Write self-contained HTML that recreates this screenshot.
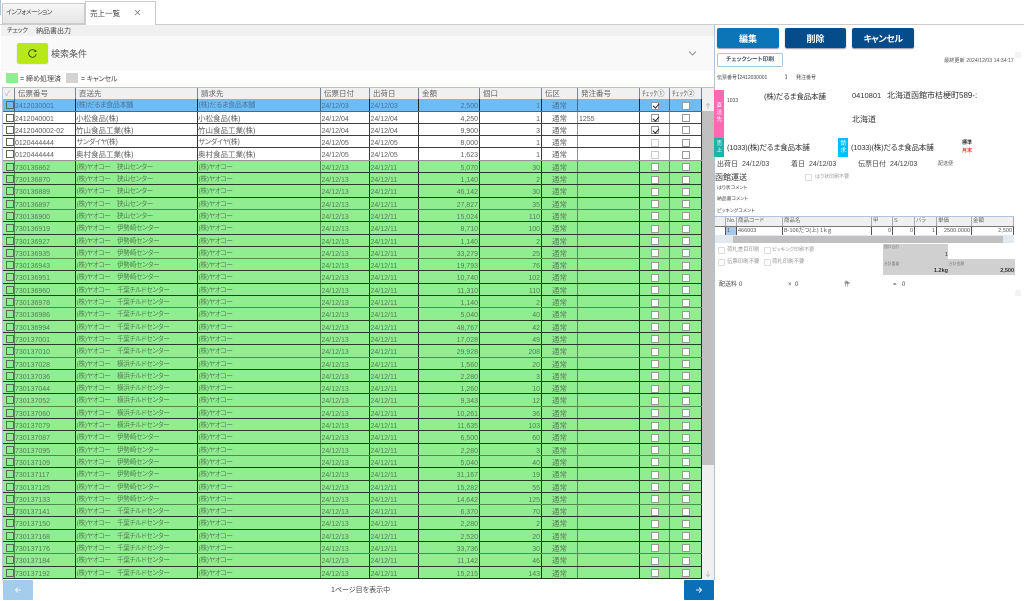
<!DOCTYPE html>
<html lang="ja"><head><meta charset="utf-8"><title>売上一覧</title>
<style>
html,body{margin:0;padding:0;background:#fff}
body{width:1024px;height:601px;position:relative;overflow:hidden;font-family:"Liberation Sans","Noto Sans CJK JP",sans-serif;font-size:7.5px;color:#555;font-feature-settings:"palt"}
.a{position:absolute;white-space:nowrap;line-height:1}
.hd,.r{position:absolute;left:3px;width:699px;display:flex;box-sizing:border-box}
.hd{top:87px;height:12.5px;background:#f0f0f0;border-top:1px solid #b4c4da;color:#666}
.hd span{border-right:1px solid #7a8696;padding-left:3px;line-height:12.5px;box-sizing:border-box;overflow:hidden;white-space:nowrap}
.t{position:absolute;left:0;top:99.3px;width:702px}
.r{position:relative;height:12.3px;border-bottom:1px solid rgba(0,0,0,.75);background:#fff;color:#606060}
.r:nth-child(4n+1){border-bottom:1.5px solid rgba(0,0,0,.42)}
.g{background:#90ee90;color:#567f56}
.s{background:#6dbcf5;color:#44749e}
.r span{display:block;height:100%;box-sizing:border-box;border-right:1px solid rgba(0,0,0,.78);line-height:11px;white-space:nowrap;overflow:hidden;position:relative}
.hd span:nth-child(1),.r span:nth-child(1){width:12px}
.hd span:nth-child(2),.r span:nth-child(2){width:61px;font-size:7px;padding-top:2px}
.hd span:nth-child(3),.r span:nth-child(3){width:122px;padding-top:1px}
.hd span:nth-child(4),.r span:nth-child(4){width:123px;padding-top:1px}
.hd span:nth-child(5),.r span:nth-child(5){width:49px;font-size:7px;padding-top:2px}
.hd span:nth-child(6),.r span:nth-child(6){width:49px;font-size:7px;padding-top:2px}
.hd span:nth-child(7),.r span:nth-child(7){width:61px;font-size:7px;padding-top:2px}
.hd span:nth-child(8),.r span:nth-child(8){width:62px;font-size:7px;padding-top:2px}
.hd span:nth-child(9),.r span:nth-child(9){width:36px;padding-top:1px}
.hd span:nth-child(10),.r span:nth-child(10){width:62px;font-size:7px;padding-top:2px}
.hd span:nth-child(11),.r span:nth-child(11){width:30px}
.hd span:nth-child(12),.r span:nth-child(12){width:32px}
.hd span{font-size:7.5px!important;padding-top:0!important}
.hd span:nth-child(11),.hd span:nth-child(12){font-size:7.5px!important;padding-left:2px}
.r span:nth-child(1),.r span:nth-child(9),.r span:nth-child(4),.r span:nth-child(11){border-right:1.5px solid rgba(0,0,0,.42)}
.r span:nth-child(7),.r span:nth-child(8){text-align:right;padding-right:1px}
.r span:nth-child(9){text-align:center}
.r span:nth-child(10){padding-left:1px}
.r span:nth-child(5),.r span:nth-child(6){padding-left:.5px}
.g span:nth-child(3),.g span:nth-child(4){font-size:6.7px;letter-spacing:-.35px;padding-left:.5px}
.l span:nth-child(3),.l span:nth-child(4){font-size:7px;letter-spacing:-.3px;padding-left:.5px}
.r span:nth-child(1)::before{content:"";position:absolute;left:2.5px;top:2px;width:6px;height:6px;border:1px solid #5b6a5b}
.r span:nth-child(11)::before,.r span:nth-child(12)::before{content:"";position:absolute;top:2.5px;width:6px;height:6px;border:1px solid #999;background:#fff}
.r span:nth-child(11)::before{left:11px}
.r span:nth-child(12)::before{left:12px}
.k::after{content:"";position:absolute;left:13.5px;top:3.2px;width:2.5px;height:5px;border:solid #222;border-width:0 1.4px 1.4px 0;transform:rotate(40deg)}
.f::before{border-color:#ccc!important}
.b{position:absolute;box-sizing:border-box;border-radius:2px;color:#fff;font-weight:bold;font-size:9px;text-align:center;line-height:22px;top:28px;height:20px;box-shadow:0 1px 1px #99a}
.cb{position:absolute;width:5px;height:5px;border:1px solid #ddd;background:#fff;border-radius:1px}
.lg{color:#999;font-size:5.4px}
.it{position:absolute;left:715px;top:216px;width:299px;height:27px;border:0}
.ih,.ir{position:absolute;left:0;width:299px;display:flex}
.ih{top:0;height:9.5px;background:#f0f0f0;border-top:1px solid #b4c4da;box-sizing:border-box;color:#666}
.ir{top:10px;height:9.5px;background:#fff;color:#555;border-top:1.5px solid #777;border-bottom:1.5px solid #666;box-sizing:border-box}
.ih span,.ir span{box-sizing:border-box;border-right:1px solid #555;font-size:5.5px;line-height:8px;white-space:nowrap;overflow:hidden;padding:0 1px}
.ih span{border-right-color:#aab}
.w1{width:11px}.w2{width:11px}.w3{width:46px}.w4{width:89px}.w5{width:21px}.w6{width:22px}.w7{width:22px}.w8{width:35px}.w9{width:42px}
.ra{text-align:right}
</style></head>
<body>
<!-- tabs -->
<div class="a" style="left:0;top:0;width:1px;height:15px;background:#a9c4e0"></div>
<div class="a" style="left:2px;top:3px;width:83px;height:21px;background:linear-gradient(#f6f6f6,#e6e6e6);border:1px solid #ccc;box-sizing:border-box"></div>
<div class="a" style="left:6px;top:10px;font-size:6.5px;color:#444;letter-spacing:-.5px">インフォメーション</div>
<div class="a" style="left:85px;top:1px;width:71px;height:24px;background:#fff;border:1px solid #ccc;border-bottom:0;box-sizing:border-box;z-index:2"></div>
<div class="a" style="left:90px;top:10px;font-size:7.5px;color:#444;z-index:3">売上一覧</div>
<svg class="a" style="left:134px;top:9px;z-index:3" width="7" height="7" viewBox="0 0 7 7"><path d="M1 1L6 6M6 1L1 6" stroke="#777" stroke-width=".8" fill="none"/></svg>
<div class="a" style="left:0;top:23.5px;width:1024px;height:1px;background:#ccc"></div>
<!-- menu -->
<div class="a" style="left:1px;top:25px;width:713px;height:11px;background:#f0f0f0"></div>
<div class="a" style="left:7px;top:28px;font-size:6.5px;color:#444;letter-spacing:-.4px">チェック</div>
<div class="a" style="left:36px;top:28px;font-size:7px;color:#444">納品書出力</div>
<!-- search -->
<div class="a" style="left:1px;top:36px;width:713px;height:35px;background:#f9f9f9"></div>
<div class="a" style="left:17px;top:43px;width:31px;height:20px;background:#b6e81a;border-radius:2px;box-shadow:0 1px 1px #bbb"></div>
<svg class="a" style="left:27px;top:48px" width="11" height="11" viewBox="0 0 11 11"><path d="M8.8 3.6A3.8 3.8 0 1 0 9.2 6.2" stroke="#39500a" stroke-width=".9" fill="none"/><path d="M6.8 3.6L9.3 4L9.2 1.6" fill="#39500a"/></svg>
<div class="a" style="left:51px;top:50px;font-size:9px;color:#555">検索条件</div>
<svg class="a" style="left:688px;top:50px" width="9" height="7" viewBox="0 0 9 7"><path d="M1 1.5L4.5 5L8 1.5" stroke="#888" stroke-width=".9" fill="none"/></svg>
<!-- legend -->
<div class="a" style="left:6px;top:73px;width:12px;height:10px;background:#90ee90"></div>
<div class="a" style="left:20px;top:76px;font-size:7px;color:#444">= 締め処理済</div>
<div class="a" style="left:66px;top:73px;width:12px;height:10px;background:#d3d3d3"></div>
<div class="a" style="left:81px;top:76px;font-size:7px;color:#444;letter-spacing:-.2px">= キャンセル</div>
<!-- grid -->
<div class="a" style="left:1.5px;top:87px;width:1.5px;height:493px;background:#b4c4da"></div>
<div class="hd"><span style="padding-left:2px;color:#aaa">✓</span><span>伝票番号</span><span>直送先</span><span>請求先</span><span>伝票日付</span><span>出荷日</span><span>金額</span><span>個口</span><span>伝区</span><span>発注番号</span><span>ﾁｪｯｸ①</span><span>ﾁｪｯｸ②</span></div>
<div class="a" style="left:702px;top:87px;width:12px;height:12.5px;background:#f0f0f0;border-top:1px solid #b4c4da;box-sizing:border-box"></div>
<div class="t" style="position:absolute">
<div class="r s l" style="left:3px"><span></span><span>2412030001</span><span>(株)だるま食品本舗</span><span>(株)だるま食品本舗</span><span>24/12/03</span><span>24/12/03</span><span>2,500</span><span>1</span><span>通常</span><span></span><span class="k"></span><span></span></div>
<div class="r" style="left:3px"><span></span><span>2412040001</span><span>小松食品(株)</span><span>小松食品(株)</span><span>24/12/04</span><span>24/12/04</span><span>4,250</span><span>1</span><span>通常</span><span>1255</span><span class="k"></span><span></span></div>
<div class="r" style="left:3px"><span></span><span>2412040002-02</span><span>竹山食品工業(株)</span><span>竹山食品工業(株)</span><span>24/12/04</span><span>24/12/04</span><span>9,900</span><span>3</span><span>通常</span><span></span><span class="k"></span><span></span></div>
<div class="r l" style="left:3px"><span></span><span>0120444444</span><span>サンダイヤ(株)</span><span>サンダイヤ(株)</span><span>24/12/05</span><span>24/12/05</span><span>8,000</span><span>1</span><span>通常</span><span></span><span class="f"></span><span></span></div>
<div class="r" style="left:3px"><span></span><span>0120444444</span><span>奥村食品工業(株)</span><span>奥村食品工業(株)</span><span>24/12/05</span><span>24/12/05</span><span>1,623</span><span>1</span><span>通常</span><span></span><span class="f"></span><span></span></div>
<div class="r g" style="left:3px"><span></span><span>730136862</span><span>(株)ヤオコー　狭山センター</span><span>(株)ヤオコー</span><span>24/12/13</span><span>24/12/11</span><span>5,070</span><span>30</span><span>通常</span><span></span><span></span><span></span></div>
<div class="r g" style="left:3px"><span></span><span>730136870</span><span>(株)ヤオコー　狭山センター</span><span>(株)ヤオコー</span><span>24/12/13</span><span>24/12/11</span><span>1,140</span><span>2</span><span>通常</span><span></span><span></span><span></span></div>
<div class="r g" style="left:3px"><span></span><span>730136889</span><span>(株)ヤオコー　狭山センター</span><span>(株)ヤオコー</span><span>24/12/13</span><span>24/12/11</span><span>46,142</span><span>30</span><span>通常</span><span></span><span></span><span></span></div>
<div class="r g" style="left:3px"><span></span><span>730136897</span><span>(株)ヤオコー　狭山センター</span><span>(株)ヤオコー</span><span>24/12/13</span><span>24/12/11</span><span>27,827</span><span>35</span><span>通常</span><span></span><span></span><span></span></div>
<div class="r g" style="left:3px"><span></span><span>730136900</span><span>(株)ヤオコー　狭山センター</span><span>(株)ヤオコー</span><span>24/12/13</span><span>24/12/11</span><span>15,024</span><span>110</span><span>通常</span><span></span><span></span><span></span></div>
<div class="r g" style="left:3px"><span></span><span>730136919</span><span>(株)ヤオコー　伊勢崎センター</span><span>(株)ヤオコー</span><span>24/12/13</span><span>24/12/11</span><span>8,710</span><span>100</span><span>通常</span><span></span><span></span><span></span></div>
<div class="r g" style="left:3px"><span></span><span>730136927</span><span>(株)ヤオコー　伊勢崎センター</span><span>(株)ヤオコー</span><span>24/12/13</span><span>24/12/11</span><span>1,140</span><span>2</span><span>通常</span><span></span><span></span><span></span></div>
<div class="r g" style="left:3px"><span></span><span>730136935</span><span>(株)ヤオコー　伊勢崎センター</span><span>(株)ヤオコー</span><span>24/12/13</span><span>24/12/11</span><span>33,279</span><span>25</span><span>通常</span><span></span><span></span><span></span></div>
<div class="r g" style="left:3px"><span></span><span>730136943</span><span>(株)ヤオコー　伊勢崎センター</span><span>(株)ヤオコー</span><span>24/12/13</span><span>24/12/11</span><span>19,793</span><span>76</span><span>通常</span><span></span><span></span><span></span></div>
<div class="r g" style="left:3px"><span></span><span>730136951</span><span>(株)ヤオコー　伊勢崎センター</span><span>(株)ヤオコー</span><span>24/12/13</span><span>24/12/11</span><span>10,740</span><span>102</span><span>通常</span><span></span><span></span><span></span></div>
<div class="r g" style="left:3px"><span></span><span>730136960</span><span>(株)ヤオコー　千葉チルドセンター</span><span>(株)ヤオコー</span><span>24/12/13</span><span>24/12/11</span><span>11,310</span><span>110</span><span>通常</span><span></span><span></span><span></span></div>
<div class="r g" style="left:3px"><span></span><span>730136978</span><span>(株)ヤオコー　千葉チルドセンター</span><span>(株)ヤオコー</span><span>24/12/13</span><span>24/12/11</span><span>1,140</span><span>2</span><span>通常</span><span></span><span></span><span></span></div>
<div class="r g" style="left:3px"><span></span><span>730136986</span><span>(株)ヤオコー　千葉チルドセンター</span><span>(株)ヤオコー</span><span>24/12/13</span><span>24/12/11</span><span>5,040</span><span>40</span><span>通常</span><span></span><span></span><span></span></div>
<div class="r g" style="left:3px"><span></span><span>730136994</span><span>(株)ヤオコー　千葉チルドセンター</span><span>(株)ヤオコー</span><span>24/12/13</span><span>24/12/11</span><span>48,767</span><span>42</span><span>通常</span><span></span><span></span><span></span></div>
<div class="r g" style="left:3px"><span></span><span>730137001</span><span>(株)ヤオコー　千葉チルドセンター</span><span>(株)ヤオコー</span><span>24/12/13</span><span>24/12/11</span><span>17,028</span><span>49</span><span>通常</span><span></span><span></span><span></span></div>
<div class="r g" style="left:3px"><span></span><span>730137010</span><span>(株)ヤオコー　千葉チルドセンター</span><span>(株)ヤオコー</span><span>24/12/13</span><span>24/12/11</span><span>29,928</span><span>208</span><span>通常</span><span></span><span></span><span></span></div>
<div class="r g" style="left:3px"><span></span><span>730137028</span><span>(株)ヤオコー　横浜チルドセンター</span><span>(株)ヤオコー</span><span>24/12/13</span><span>24/12/11</span><span>1,560</span><span>20</span><span>通常</span><span></span><span></span><span></span></div>
<div class="r g" style="left:3px"><span></span><span>730137036</span><span>(株)ヤオコー　横浜チルドセンター</span><span>(株)ヤオコー</span><span>24/12/13</span><span>24/12/11</span><span>2,280</span><span>3</span><span>通常</span><span></span><span></span><span></span></div>
<div class="r g" style="left:3px"><span></span><span>730137044</span><span>(株)ヤオコー　横浜チルドセンター</span><span>(株)ヤオコー</span><span>24/12/13</span><span>24/12/11</span><span>1,260</span><span>10</span><span>通常</span><span></span><span></span><span></span></div>
<div class="r g" style="left:3px"><span></span><span>730137052</span><span>(株)ヤオコー　横浜チルドセンター</span><span>(株)ヤオコー</span><span>24/12/13</span><span>24/12/11</span><span>9,343</span><span>12</span><span>通常</span><span></span><span></span><span></span></div>
<div class="r g" style="left:3px"><span></span><span>730137060</span><span>(株)ヤオコー　横浜チルドセンター</span><span>(株)ヤオコー</span><span>24/12/13</span><span>24/12/11</span><span>10,261</span><span>36</span><span>通常</span><span></span><span></span><span></span></div>
<div class="r g" style="left:3px"><span></span><span>730137079</span><span>(株)ヤオコー　横浜チルドセンター</span><span>(株)ヤオコー</span><span>24/12/13</span><span>24/12/11</span><span>11,635</span><span>103</span><span>通常</span><span></span><span></span><span></span></div>
<div class="r g" style="left:3px"><span></span><span>730137087</span><span>(株)ヤオコー　伊勢崎センター</span><span>(株)ヤオコー</span><span>24/12/13</span><span>24/12/11</span><span>6,500</span><span>60</span><span>通常</span><span></span><span></span><span></span></div>
<div class="r g" style="left:3px"><span></span><span>730137095</span><span>(株)ヤオコー　伊勢崎センター</span><span>(株)ヤオコー</span><span>24/12/13</span><span>24/12/11</span><span>2,280</span><span>3</span><span>通常</span><span></span><span></span><span></span></div>
<div class="r g" style="left:3px"><span></span><span>730137109</span><span>(株)ヤオコー　伊勢崎センター</span><span>(株)ヤオコー</span><span>24/12/13</span><span>24/12/11</span><span>5,040</span><span>40</span><span>通常</span><span></span><span></span><span></span></div>
<div class="r g" style="left:3px"><span></span><span>730137117</span><span>(株)ヤオコー　伊勢崎センター</span><span>(株)ヤオコー</span><span>24/12/13</span><span>24/12/11</span><span>31,167</span><span>19</span><span>通常</span><span></span><span></span><span></span></div>
<div class="r g" style="left:3px"><span></span><span>730137125</span><span>(株)ヤオコー　伊勢崎センター</span><span>(株)ヤオコー</span><span>24/12/13</span><span>24/12/11</span><span>15,282</span><span>55</span><span>通常</span><span></span><span></span><span></span></div>
<div class="r g" style="left:3px"><span></span><span>730137133</span><span>(株)ヤオコー　伊勢崎センター</span><span>(株)ヤオコー</span><span>24/12/13</span><span>24/12/11</span><span>14,642</span><span>125</span><span>通常</span><span></span><span></span><span></span></div>
<div class="r g" style="left:3px"><span></span><span>730137141</span><span>(株)ヤオコー　千葉チルドセンター</span><span>(株)ヤオコー</span><span>24/12/13</span><span>24/12/11</span><span>6,370</span><span>70</span><span>通常</span><span></span><span></span><span></span></div>
<div class="r g" style="left:3px"><span></span><span>730137150</span><span>(株)ヤオコー　千葉チルドセンター</span><span>(株)ヤオコー</span><span>24/12/13</span><span>24/12/11</span><span>2,280</span><span>2</span><span>通常</span><span></span><span></span><span></span></div>
<div class="r g" style="left:3px"><span></span><span>730137168</span><span>(株)ヤオコー　千葉チルドセンター</span><span>(株)ヤオコー</span><span>24/12/13</span><span>24/12/11</span><span>2,520</span><span>20</span><span>通常</span><span></span><span></span><span></span></div>
<div class="r g" style="left:3px"><span></span><span>730137176</span><span>(株)ヤオコー　千葉チルドセンター</span><span>(株)ヤオコー</span><span>24/12/13</span><span>24/12/11</span><span>33,736</span><span>30</span><span>通常</span><span></span><span></span><span></span></div>
<div class="r g" style="left:3px"><span></span><span>730137184</span><span>(株)ヤオコー　千葉チルドセンター</span><span>(株)ヤオコー</span><span>24/12/13</span><span>24/12/11</span><span>11,142</span><span>46</span><span>通常</span><span></span><span></span><span></span></div>
<div class="r g" style="left:3px"><span></span><span>730137192</span><span>(株)ヤオコー　千葉チルドセンター</span><span>(株)ヤオコー</span><span>24/12/13</span><span>24/12/11</span><span>15,215</span><span>143</span><span>通常</span><span></span><span></span><span></span></div>
</div>
<!-- scrollbar -->
<div class="a" style="left:702px;top:99.5px;width:12px;height:480px;background:#f0f0f0"></div>
<div class="a" style="left:702px;top:111px;width:12px;height:354px;background:#c0c0c0"></div>
<svg class="a" style="left:704px;top:102px" width="8" height="8" viewBox="0 0 8 8"><path d="M4 7V1.5M2 3.5L4 1.5L6 3.5" stroke="#bbb" stroke-width=".8" fill="none"/></svg>
<svg class="a" style="left:704px;top:570px" width="8" height="8" viewBox="0 0 8 8"><path d="M4 1V6.5M2 4.5L4 6.5L6 4.5" stroke="#bbb" stroke-width=".8" fill="none"/></svg>
<div class="a" style="left:714px;top:24px;width:1px;height:556px;background:#aec3da"></div>
<!-- bottom -->
<div class="a" style="left:3px;top:580px;width:30px;height:20px;background:#a3cdea;border-radius:1px"></div>
<svg class="a" style="left:14px;top:586px" width="8" height="8" viewBox="0 0 8 8"><path d="M7 4H1.5M4 1.5L1.5 4L4 6.5" stroke="#e8f3fb" stroke-width="1.1" fill="none"/></svg>
<div class="a" style="left:331px;top:586.5px;font-size:7px;color:#444">1ページ目を表示中</div>
<div class="a" style="left:684px;top:580px;width:30px;height:20px;background:#0b6fb8;border-radius:1px"></div>
<svg class="a" style="left:695px;top:586px" width="8" height="8" viewBox="0 0 8 8"><path d="M1 4H6.5M4 1.5L6.5 4L4 6.5" stroke="#d8ecf9" stroke-width="1.1" fill="none"/></svg>
<!-- right panel -->
<div class="b" style="left:717px;width:62px;background:#0b75b8">編集</div>
<div class="b" style="left:785px;width:61px;background:#064b8a">削除</div>
<div class="b" style="left:852px;width:62px;background:#064b8a;letter-spacing:-.5px">キャンセル</div>
<div class="a" style="left:717px;top:53px;width:66px;height:14px;border:1px solid #a8c8e0;box-sizing:border-box;border-radius:2px;background:#fff;font-size:5.8px;font-weight:bold;color:#456;text-align:center;line-height:13px">チェックシート印刷</div>
<div class="a" style="left:944px;top:58.5px;font-size:5.2px;color:#555">最終更新 2024/12/03 14:34:17</div>
<div class="a" style="left:717px;top:75.5px;font-size:5px;color:#444">伝票番号【2412030001</div>
<div class="a" style="left:785px;top:75.5px;font-size:5px;color:#444">】</div>
<div class="a" style="left:796px;top:75.5px;font-size:5px;color:#444">発注番号</div>
<div class="a" style="left:714px;top:90px;width:10px;height:48px;background:#ff69b4"></div>
<div class="a" style="left:714px;top:138px;width:10px;height:19px;background:#20b2aa"></div>
<div class="a" style="left:838px;top:138px;width:10px;height:19px;background:#00bfff"></div>
<div class="a" style="left:716.5px;top:103px;font-size:5.5px;line-height:7px;color:#fff;white-space:normal;width:6px">直送先</div>
<div class="a" style="left:716.5px;top:141px;font-size:5.5px;line-height:7px;color:#fff;white-space:normal;width:6px">売上</div>
<div class="a" style="left:840.5px;top:141px;font-size:5.5px;line-height:7px;color:#fff;white-space:normal;width:6px">請求</div>
<div class="a" style="left:727px;top:99px;font-size:5px;color:#444">1033</div>
<div class="a" style="left:764px;top:92.5px;font-size:7.6px;color:#333;letter-spacing:-.3px">(株)だるま食品本舗</div>
<div class="a" style="left:852px;top:92px;font-size:7.5px;color:#333">0410801</div>
<div class="a" style="left:887px;top:92px;font-size:8px;color:#333">北海道函館市桔梗町589-:</div>
<div class="a" style="left:852px;top:116px;font-size:8px;color:#333">北海道</div>
<div class="a" style="left:727px;top:144px;font-size:7.6px;color:#333;letter-spacing:-.25px">(1033)(株)だるま食品本舗</div>
<div class="a" style="left:851px;top:144px;font-size:7.6px;color:#333;letter-spacing:-.25px">(1033)(株)だるま食品本舗</div>
<div class="a" style="left:962px;top:141px;font-size:5px;font-weight:bold;color:#333">標準</div>
<div class="a" style="left:962px;top:149px;font-size:5px;font-weight:bold;color:#e33">月末</div>
<div class="a" style="left:717px;top:160.5px;font-size:7px;color:#444">出荷日</div>
<div class="a" style="left:742px;top:160.5px;font-size:7px;color:#444">24/12/03</div>
<div class="a" style="left:791px;top:160.5px;font-size:7px;color:#444">着日</div>
<div class="a" style="left:809px;top:160.5px;font-size:7px;color:#444">24/12/03</div>
<div class="a" style="left:858px;top:160.5px;font-size:7px;color:#444">伝票日付</div>
<div class="a" style="left:890px;top:160.5px;font-size:7px;color:#444">24/12/03</div>
<div class="a" style="left:938px;top:161.5px;font-size:5px;color:#555">配送便</div>
<div class="a" style="left:715px;top:174px;font-size:8px;color:#333">函館運送</div>
<div class="cb" style="left:805px;top:174px"></div>
<div class="a lg" style="left:815px;top:175px;font-size:5px">はり状印刷不要</div>
<div class="a" style="left:717px;top:187px;font-size:4.8px;color:#444">はり状コメント</div>
<div class="a" style="left:717px;top:198px;font-size:4.8px;color:#444">納品書コメント</div>
<div class="a" style="left:717px;top:210px;font-size:4.8px;color:#444">ピッキングコメント</div>
<div class="it">
<div class="ih"><span class="w1"></span><span class="w2">No.</span><span class="w3">商品コード</span><span class="w4">商品名</span><span class="w5">甲</span><span class="w6">S</span><span class="w7">バラ</span><span class="w8">単価</span><span class="w9">金額</span></div>
<div class="ir"><span class="w1"></span><span class="w2" style="background:#a8c8e8">1</span><span class="w3">466003</span><span class="w4">B-106だつ(上) 1ｋｇ</span><span class="w5 ra">0</span><span class="w6 ra">0</span><span class="w7 ra">1</span><span class="w8 ra">2500.0000</span><span class="w9 ra">2,500</span></div>
<div style="position:absolute;left:0;top:19px;width:299px;height:8px;background:#e4e9ef"></div>
<div style="position:absolute;left:18px;top:19.5px;width:270px;height:7px;background:#c0c0c0"></div>
</div>
<div class="cb" style="left:718px;top:247px"></div><div class="a lg" style="left:727px;top:248px">荷札差目印刷</div>
<div class="cb" style="left:764px;top:247px"></div><div class="a lg" style="left:772px;top:248px;font-size:5px">ピッキング印刷不要</div>
<div class="cb" style="left:718px;top:259px"></div><div class="a lg" style="left:727px;top:260px">伝票印刷不要</div>
<div class="cb" style="left:764px;top:259px"></div><div class="a lg" style="left:772px;top:260px">荷札印刷不要</div>
<div class="a" style="left:883px;top:244px;width:65px;height:14.5px;background:#d0d0d0"></div>
<div class="a" style="left:883px;top:259px;width:132px;height:16px;background:#d0d0d0"></div>
<div class="a" style="left:884px;top:246px;font-size:3.8px;color:#777">個口合計</div>
<div class="a" style="left:884px;top:263px;font-size:3.8px;color:#777">合計重量</div>
<div class="a" style="left:949px;top:263px;font-size:3.8px;color:#777">合計金額</div>
<div class="a" style="left:940px;top:252.5px;width:8px;text-align:right;font-size:5.5px;color:#333">1</div>
<div class="a" style="left:920px;top:269px;width:28px;text-align:right;font-size:5.5px;font-weight:bold;color:#333">1.2kg</div>
<div class="a" style="left:985px;top:269px;width:29px;text-align:right;font-size:5.5px;font-weight:bold;color:#333">2,500</div>
<div class="a" style="left:719px;top:282px;font-size:6px;color:#444">配送料</div>
<div class="a" style="left:739px;top:282px;font-size:6px;color:#444">0</div>
<div class="a" style="left:788px;top:282px;font-size:6px;color:#444">×</div>
<div class="a" style="left:795px;top:282px;font-size:6px;color:#444">0</div>
<div class="a" style="left:844px;top:282px;font-size:6px;color:#444">件</div>
<div class="a" style="left:893px;top:282px;font-size:6px;color:#444">=</div>
<div class="a" style="left:902px;top:282px;font-size:6px;color:#444">0</div>
<div class="a" style="left:1015px;top:52px;width:6px;height:6px;background:#f4f4f4"></div>
<div class="a" style="left:1015px;top:290px;width:6px;height:6px;background:#f4f4f4"></div>
</body></html>
